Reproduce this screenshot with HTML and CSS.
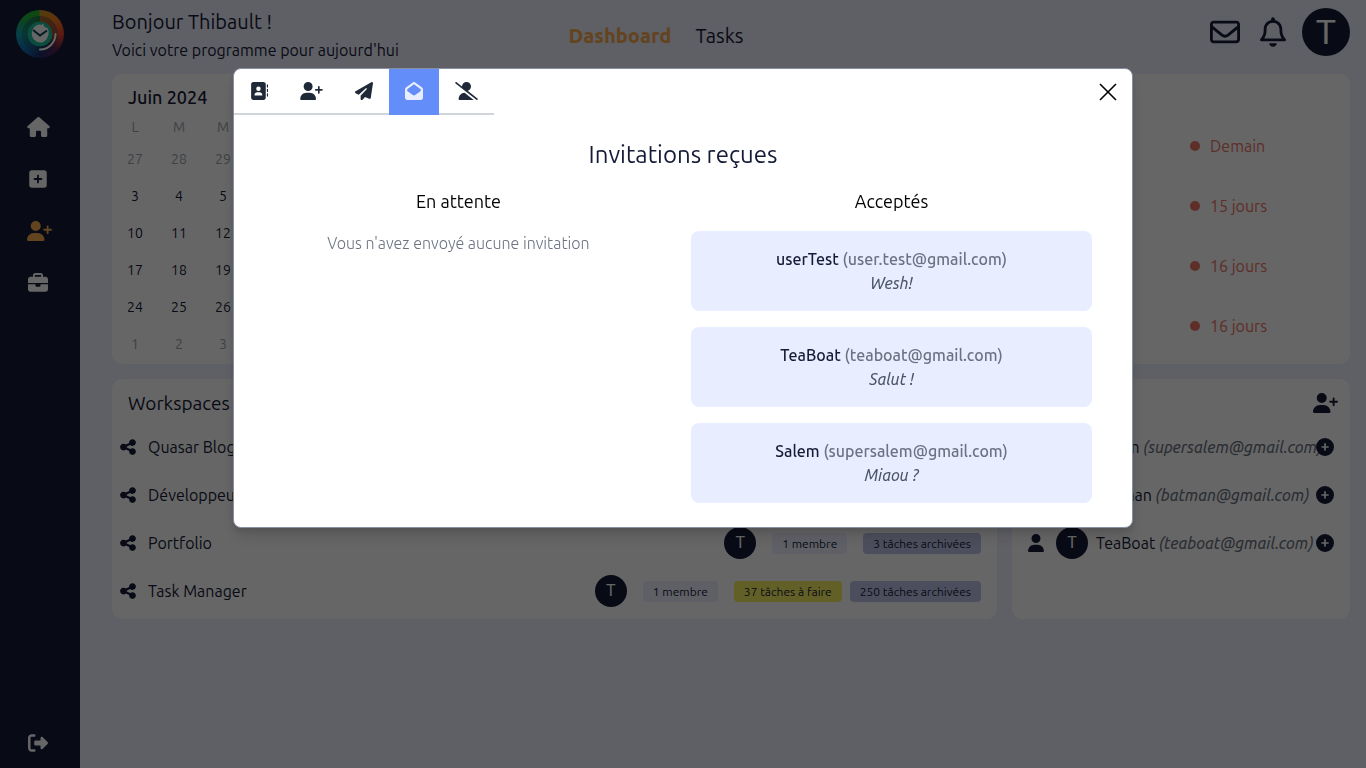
FILE: index.html
```html
<!DOCTYPE html>
<html lang="fr">
<head>
<meta charset="utf-8">
<meta name="viewport" content="width=device-width, initial-scale=1">
<title>Dashboard</title>
<link rel="stylesheet" href="styles.css">
</head>
<body>
<svg class="sprite" aria-hidden="true">
  <symbol id="house" viewBox="0 0 576 512"><path d="M575.8 255.5c0 18-15 32.1-32 32.1h-32l.7 160.2c0 2.7-.2 5.4-.5 8.1V472c0 22.1-17.9 40-40 40H392c-22.1 0-40-17.9-40-40V384c0-17.7-14.3-32-32-32H256c-17.7 0-32 14.3-32 32v88c0 22.1-17.9 40-40 40H104c-22.1 0-40-17.9-40-40V287.6H32c-18 0-32-14-32-32.1c0-9 3-17 10-24L266.4 8c7-7 15-8 22-8s15 2 21 7L564.8 231.5c8 7 12 15 11 24z"/></symbol>
  <symbol id="square-plus" viewBox="0 0 448 512"><path d="M64 32C28.7 32 0 60.7 0 96V416c0 35.3 28.7 64 64 64H384c35.3 0 64-28.7 64-64V96c0-35.3-28.7-64-64-64H64zM200 344V280H136c-13.3 0-24-10.7-24-24s10.7-24 24-24h64V168c0-13.3 10.7-24 24-24s24 10.7 24 24v64h64c13.3 0 24 10.7 24 24s-10.7 24-24 24H248v64c0 13.3-10.7 24-24 24s-24-10.7-24-24z"/></symbol>
  <symbol id="user-plus" viewBox="0 0 640 512"><path d="M96 128a128 128 0 1 1 256 0A128 128 0 1 1 96 128zM0 482.3C0 383.8 79.8 304 178.3 304h91.4C368.2 304 448 383.8 448 482.3c0 16.4-13.3 29.7-29.7 29.7H29.7C13.3 512 0 498.7 0 482.3zM504 312V248H440c-13.3 0-24-10.7-24-24s10.7-24 24-24h64V136c0-13.3 10.7-24 24-24s24 10.7 24 24v64h64c13.3 0 24 10.7 24 24s-10.7 24-24 24H552v64c0 13.3-10.7 24-24 24s-24-10.7-24-24z"/></symbol>
  <symbol id="briefcase" viewBox="0 0 512 512"><path d="M184 48H328c4.4 0 8 3.6 8 8V96H176V56c0-4.4 3.6-8 8-8zm-56 8V96H64C28.7 96 0 124.7 0 160v96H512V160c0-35.3-28.7-64-64-64H384V56c0-30.9-25.1-56-56-56H184c-30.9 0-56 25.1-56 56zM512 288H320v32c0 17.7-14.3 32-32 32H224c-17.7 0-32-14.3-32-32V288H0V416c0 35.3 28.7 64 64 64H448c35.3 0 64-28.7 64-64V288z"/></symbol>
  <symbol id="logout" viewBox="0 0 512 512"><path d="M377.9 105.9L500.7 228.7c7.2 7.2 11.3 17.1 11.3 27.3s-4.1 20.1-11.3 27.3L377.9 406.1c-6.4 6.4-15 9.9-24 9.9c-18.7 0-33.9-15.2-33.9-33.9V320H192c-17.7 0-32-14.3-32-32V224c0-17.7 14.3-32 32-32H320V129.9c0-18.7 15.2-33.9 33.9-33.9c9 0 17.6 3.6 24 9.9zM160 96H96c-17.7 0-32 14.3-32 32V384c0 17.7 14.3 32 32 32h64c17.7 0 32 14.3 32 32s-14.3 32-32 32H96c-53 0-96-43-96-96V128C0 75 43 32 96 32h64c17.7 0 32 14.3 32 32s-14.3 32-32 32z"/></symbol>
  <symbol id="address-book" viewBox="0 0 512 512"><path d="M96 0C60.7 0 32 28.7 32 64V448c0 35.3 28.7 64 64 64H384c35.3 0 64-28.7 64-64V64c0-35.3-28.7-64-64-64H96zM208 288h64c44.2 0 80 35.8 80 80c0 8.800-7.200 16-16 16H144c-8.800 0-16-7.200-16-16c0-44.200 35.800-80 80-80zm-32-96a64 64 0 1 1 128 0 64 64 0 1 1 -128 0zM512 80c0-8.800-7.200-16-16-16s-16 7.200-16 16v64c0 8.800 7.200 16 16 16s16-7.200 16-16V80zM496 192c-8.800 0-16 7.200-16 16v64c0 8.800 7.200 16 16 16s16-7.200 16-16V208c0-8.800-7.200-16-16-16zm16 144c0-8.800-7.200-16-16-16s-16 7.200-16 16v64c0 8.800 7.200 16 16 16s16-7.200 16-16V336z"/></symbol>
  <symbol id="paper-plane" viewBox="0 0 512 512"><path d="M498.1 5.6c10.1 7 15.4 19.1 13.5 31.2l-64 416c-1.5 9.7-7.4 18.2-16 23s-18.900 5.400-28 1.600L284 427.700l-68.500 74.100c-8.900 9.700-22.900 12.900-35.200 8.100S160 493.200 160 480V396.400c0-4 1.500-7.800 4.200-10.700L331.800 202.800c5.800-6.300 5.600-16-.4-22s-15.700-6.400-22-.7L106 360.800 17.700 316.600C7.100 311.300 .3 300.700 0 288.900s5.900-22.800 16.100-28.700l448-256c10.700-6.100 23.900-5.500 34 1.400z"/></symbol>
  <symbol id="envelope-open" viewBox="0 0 512 512"><path fill-rule="evenodd" d="M64 208.100L256 65.900 448 208.100v47.400L289.500 373c-9.700 7.200-21.400 11-33.500 11s-23.800-3.900-33.500-11L64 255.500V208.100zM256 0c-12.100 0-23.800 3.900-33.500 11L25.900 156.700C9.600 168.800 0 187.800 0 208.100V448c0 35.300 28.700 64 64 64H448c35.300 0 64-28.700 64-64V208.100c0-20.300-9.600-39.400-25.900-51.400L289.500 11C279.800 3.900 268.100 0 256 0z"/></symbol>
  <symbol id="user-slash" viewBox="0 0 640 512"><path d="M38.800 5.100C28.400-3.100 13.300-1.200 5.100 9.200S-1.200 34.700 9.200 42.900l592 464c10.400 8.200 25.500 6.300 33.700-4.100s6.300-25.500-4.100-33.700L353.300 251.600C407.900 237 448 187.200 448 128C448 57.300 390.700 0 320 0C250.200 0 193.500 55.800 192 125.200L38.800 5.100zM264.300 304.300C170.500 309.400 96 387.200 96 482.300c0 16.400 13.300 29.700 29.700 29.700H514.300c3.900 0 7.600-.7 11-2.100l-261-205.600z"/></symbol>
  <symbol id="share" viewBox="0 0 448 512"><path d="M352 224c53 0 96-43 96-96s-43-96-96-96s-96 43-96 96c0 4 .2 8 .7 11.900l-94.100 47C145.400 170.200 121.900 160 96 160c-53 0-96 43-96 96s43 96 96 96c25.900 0 49.400-10.200 66.600-26.900l94.100 47c-.5 3.900-.7 7.800-.7 11.900c0 53 43 96 96 96s96-43 96-96s-43-96-96-96c-25.900 0-49.400 10.200-66.600 26.900l-94.100-47c.5-3.900 .7-7.800 .7-11.900s-.2-8-.7-11.900l94.100-47C302.600 213.800 326.100 224 352 224z"/></symbol>
  <symbol id="circle-plus" viewBox="0 0 512 512"><path d="M256 512A256 256 0 1 0 256 0a256 256 0 1 0 0 512zM232 344V280H168c-13.300 0-24-10.700-24-24s10.700-24 24-24h64V168c0-13.300 10.700-24 24-24s24 10.700 24 24v64h64c13.300 0 24 10.700 24 24s-10.700 24-24 24H280v64c0 13.300-10.700 24-24 24s-24-10.700-24-24z"/></symbol>
  <symbol id="user" viewBox="0 0 448 512"><path d="M224 256A128 128 0 1 0 224 0a128 128 0 1 0 0 256zm-45.700 48C79.800 304 0 383.800 0 482.300C0 498.700 13.300 512 29.700 512H418.300c16.400 0 29.700-13.300 29.700-29.700C448 383.800 368.200 304 269.700 304H178.300z"/></symbol>
  <symbol id="envelope" viewBox="0 0 512 512"><path d="M64 112c-8.800 0-16 7.200-16 16v22.100L220.500 291.700c20.700 17 50.400 17 71.100 0L464 150.100V128c0-8.800-7.200-16-16-16H64zM48 212.200V384c0 8.800 7.200 16 16 16H448c8.800 0 16-7.200 16-16V212.200L322 328.800c-38.400 31.500-93.700 31.500-132 0L48 212.200zM0 128C0 92.700 28.700 64 64 64H448c35.300 0 64 28.700 64 64V384c0 35.300-28.700 64-64 64H64c-35.300 0-64-28.700-64-64V128z"/></symbol>
  <symbol id="bell" viewBox="0 0 448 512"><path d="M224 0c-17.700 0-32 14.300-32 32V51.200C119 66 64 130.600 64 208v25.400c0 45.400-15.500 89.500-43.800 124.900L5.300 377c-5.800 7.200-6.900 17.100-2.900 25.400S14.800 416 24 416H424c9.200 0 17.600-5.300 21.600-13.600s2.900-18.200-2.900-25.400l-14.900-18.600C399.500 322.900 384 278.800 384 233.400V208c0-77.400-55-142-128-156.800V32c0-17.700-14.300-32-32-32zm0 96c61.900 0 112 50.100 112 112v25.400c0 47.900 13.900 94.600 39.700 134.600H72.300C98.100 328 112 281.300 112 233.400V208c0-61.900 50.100-112 112-112zm64 352H160c0 17 6.700 33.300 18.700 45.300s28.300 18.700 45.300 18.700s33.300-6.700 45.300-18.700s18.700-28.300 18.700-45.300z"/></symbol>
</svg>

<div class="app">
  <aside class="sidebar">
    <a class="logo" href="#" aria-label="Accueil">
      <span class="logo-inner">
        <svg viewBox="6 6 36 36"><path d="M24 14.500a9 9 0 1 0 3.500 17.500l3-2.500 2-4.500a8 8 0 0 0-1-7l-3-1-1.500-3.500-1.500 1.500z" fill="#fff"/><path d="M17 20l7 5.500 7-5" fill="none" stroke="#0e4a55" stroke-width="2"/><path d="M39.500 24A15.500 15.500 0 0 1 24 39.500" fill="none" stroke="#fff" stroke-width="2" stroke-linecap="round"/></svg>
      </span>
    </a>
    <nav class="side-nav" aria-label="Navigation">
      <a href="#" aria-label="Accueil"><svg class="i-house"><use href="#house"/></svg></a>
      <a href="#" aria-label="Ajouter"><svg class="i-narrow"><use href="#square-plus"/></svg></a>
      <a href="#" class="current" aria-label="Contacts"><svg class="i-wide"><use href="#user-plus"/></svg></a>
      <a href="#" aria-label="Workspaces"><svg class="i-square"><use href="#briefcase"/></svg></a>
    </nav>
    <div class="side-nav side-end">
      <a href="#" aria-label="Déconnexion"><svg class="i-square"><use href="#logout"/></svg></a>
    </div>
  </aside>

  <div class="page">
    <header class="top">
      <div class="greeting">
        <h1>Bonjour Thibault !</h1>
        <p>Voici votre programme pour aujourd'hui</p>
      </div>
      <nav class="top-nav" aria-label="Vues">
        <a href="#" class="active">Dashboard</a>
        <a href="#">Tasks</a>
      </nav>
      <div class="top-actions">
        <button type="button" aria-label="Messages"><svg class="i-envelope"><use href="#envelope"/></svg></button>
        <button type="button" aria-label="Notifications"><svg class="i-bell"><use href="#bell"/></svg></button>
        <button type="button" class="avatar large" aria-label="Profil">T</button>
      </div>
    </header>

    <main class="board">
      <div class="row first">
        <section class="card calendar">
          <h2>Juin 2024</h2>
          <table>
            <thead><tr><th>L</th><th>M</th><th>M</th><th>J</th><th>V</th><th>S</th><th>D</th></tr></thead>
            <tbody>
              <tr><td class="out">27</td><td class="out">28</td><td class="out">29</td><td class="out">30</td><td class="out">31</td><td>1</td><td>2</td></tr>
              <tr><td>3</td><td>4</td><td>5</td><td>6</td><td>7</td><td>8</td><td>9</td></tr>
              <tr><td>10</td><td>11</td><td>12</td><td>13</td><td>14</td><td>15</td><td>16</td></tr>
              <tr><td>17</td><td>18</td><td>19</td><td>20</td><td>21</td><td>22</td><td>23</td></tr>
              <tr><td>24</td><td>25</td><td>26</td><td>27</td><td>28</td><td>29</td><td>30</td></tr>
              <tr><td class="out">1</td><td class="out">2</td><td class="out">3</td><td class="out">4</td><td class="out">5</td><td class="out">6</td><td class="out">7</td></tr>
            </tbody>
          </table>
        </section>
        <section class="card deadlines" aria-label="Échéances">
          <ul>
            <li>Demain</li>
            <li>15 jours</li>
            <li>16 jours</li>
            <li>16 jours</li>
          </ul>
        </section>
      </div>

      <div class="row second">
        <section class="card workspaces">
          <h2>Workspaces</h2>
          <ul>
            <li><svg class="i-share"><use href="#share"/></svg><a href="#">Quasar Blog</a></li>
            <li><svg class="i-share"><use href="#share"/></svg><a href="#">Développeur</a></li>
            <li><svg class="i-share"><use href="#share"/></svg><a href="#">Portfolio</a>
              <span class="avatar">T</span><span class="badge">1 membre</span><span class="tags"><span class="badge done">3 tâches archivées</span></span></li>
            <li><svg class="i-share"><use href="#share"/></svg><a href="#">Task Manager</a>
              <span class="avatar">T</span><span class="badge">1 membre</span><span class="tags"><span class="badge todo">37 tâches à faire</span><span class="badge done">250 tâches archivées</span></span></li>
          </ul>
        </section>
        <section class="card contacts" aria-label="Contacts">
          <div class="contacts-head"><button type="button" aria-label="Ajouter un contact"><svg class="i-wide"><use href="#user-plus"/></svg></button></div>
          <ul>
            <li><svg class="i-user"><use href="#user"/></svg><span class="avatar">S</span><span class="who">Salem <em>(supersalem@gmail.com)</em></span><button type="button" aria-label="Ajouter Salem"><svg class="i-tab"><use href="#circle-plus"/></svg></button></li>
            <li><svg class="i-user"><use href="#user"/></svg><span class="avatar">B</span><span class="who">Batman <em>(batman@gmail.com)</em></span><button type="button" aria-label="Ajouter Batman"><svg class="i-tab"><use href="#circle-plus"/></svg></button></li>
            <li><svg class="i-user"><use href="#user"/></svg><span class="avatar">T</span><span class="who">TeaBoat <em>(teaboat@gmail.com)</em></span><button type="button" aria-label="Ajouter TeaBoat"><svg class="i-tab"><use href="#circle-plus"/></svg></button></li>
          </ul>
        </section>
      </div>
    </main>
  </div>
</div>

<div class="overlay">
  <div class="modal" role="dialog" aria-modal="true" aria-labelledby="modal-title">
    <div class="modal-bar">
      <div class="tabs" role="tablist">
        <button type="button" role="tab" aria-label="Contacts"><svg class="i-tab"><use href="#address-book"/></svg></button>
        <button type="button" role="tab" aria-label="Ajouter"><svg class="i-tab-wide"><use href="#user-plus"/></svg></button>
        <button type="button" role="tab" aria-label="Invitations envoyées"><svg class="i-tab"><use href="#paper-plane"/></svg></button>
        <button type="button" role="tab" aria-label="Invitations reçues" aria-selected="true" class="selected"><svg class="i-tab"><use href="#envelope-open"/></svg></button>
        <button type="button" role="tab" aria-label="Bloqués"><svg class="i-tab-wide"><use href="#user-slash"/></svg></button>
      </div>
      <button type="button" class="close" aria-label="Fermer"><svg viewBox="0 0 18 18"><path d="M1 1l16 16M17 1L1 17" fill="none" stroke="#000" stroke-width="1.600"/></svg></button>
    </div>
    <h2 id="modal-title">Invitations reçues</h2>
    <div class="columns">
      <section>
        <h3>En attente</h3>
        <p class="empty">Vous n'avez envoyé aucune invitation</p>
      </section>
      <section>
        <h3>Acceptés</h3>
        <ul class="invites">
          <li><p class="sender">userTest <span>(user.test@gmail.com)</span></p><p class="message">Wesh!</p></li>
          <li><p class="sender">TeaBoat <span>(teaboat@gmail.com)</span></p><p class="message">Salut !</p></li>
          <li><p class="sender">Salem <span>(supersalem@gmail.com)</span></p><p class="message">Miaou ?</p></li>
        </ul>
      </section>
    </div>
  </div>
</div>
</body>
</html>
```
FILE: styles.css
```css
*, *::before, *::after { box-sizing: border-box; }

:root {
  --navy: #151a36;
  --orange: #f8aa50;
  --mist: #eef0ff;
  --regular: 430;
  --medium: 560;
}

body {
  margin: 0;
  background: var(--mist);
  color: var(--navy);
  font-family: Ubuntu, "Noto Sans", "Open Sans", sans-serif;
  font-size: 16px;
  font-weight: var(--regular);
  line-height: 24px;
}

h1, h2, h3, p, ul { margin: 0; padding: 0; font-weight: var(--regular); }
ul { list-style: none; }
a { color: inherit; text-decoration: none; }
button { border: 0; padding: 0; background: none; color: inherit; font: inherit; cursor: pointer; }
svg { display: block; fill: currentColor; flex: none; }
.sprite { display: none; }

.i-house { width: 23px; height: 20px; }
.i-narrow { width: 18px; height: 20px; }
.i-square { width: 20px; height: 20px; }
.i-wide { width: 25px; height: 20px; }
.i-tab { width: 18px; height: 18px; }
.i-tab-wide { width: 23px; height: 18px; }
.i-share { width: 16px; height: 18px; }
.i-user { width: 16px; height: 18px; }
.i-envelope { width: 30px; height: 30px; }
.i-bell { width: 26px; height: 30px; }

.app { display: flex; min-height: 100vh; }

.sidebar {
  display: flex;
  flex-direction: column;
  width: 80px;
  padding: 10px 16px 13px;
  background: var(--navy);
  color: #fff;
}
.logo {
  display: grid;
  place-items: center;
  width: 48px;
  height: 48px;
  border-radius: 50%;
  background: conic-gradient(#c9952a, #f0821e 12%, #e8432c 25%, #5b2450 37%, #1d2b6e 50%, #1172b8 64%, #12a0b0 75%, #1fb43e 88%, #27b52a 99%, #c9952a);
}
.logo-inner {
  display: grid;
  place-items: center;
  width: 36px;
  height: 36px;
  border-radius: 50%;
  background: radial-gradient(closest-side, #1bbf98 68%, transparent 70%), conic-gradient(#a06a30, #a04a34 25%, #1c2456 42%, #155e8a 60%, #128a80 75%, #1f7a3c);
}
.logo svg { width: 36px; height: 36px; }

.side-nav { display: flex; flex-direction: column; gap: 28px; padding: 57px 11px 0; }
.side-nav a { display: grid; width: 22px; height: 24px; align-items: center; justify-content: safe center; }
.side-nav .current { color: var(--orange); }
.side-end { margin-top: auto; padding-top: 16px; }

.page { flex: 1; min-width: 0; padding: 8px 16px 16px 32px; }

.top { display: grid; grid-template-columns: 1fr auto 1fr; height: 66px; }
.greeting h1 { font-size: 20px; line-height: 28px; }
.greeting p { line-height: 28px; white-space: nowrap; }
.top-nav { display: flex; gap: 24px; align-items: center; height: 56px; margin-right: 150px; font-size: 20px; }
.top-nav .active { color: var(--orange); font-weight: 800; }
.top-actions { display: flex; align-items: center; justify-content: flex-end; height: 48px; gap: 16px; }
.top-actions .i-envelope { margin-right: 4px; }

.avatar {
  display: grid;
  flex: none;
  place-items: center;
  width: 32px;
  height: 32px;
  border-radius: 50%;
  background: var(--navy);
  color: #fff;
  font-family: Roboto, "Liberation Sans", sans-serif;
  font-size: 16px;
  font-weight: 400;
}
.avatar.large { width: 48px; height: 48px; font-size: 34px; }

.board { display: grid; gap: 15px; }
.row { display: grid; gap: 15px; }
.first { grid-template-columns: 340px 1fr; }
.second { grid-template-columns: minmax(0, 885fr) minmax(0, 338fr); }
.card { border-radius: 10px; background: #fff; }

.calendar { padding: 11px 0 2px; }
.calendar h2 { padding-left: 16px; font-size: 18px; font-weight: var(--medium); }
.calendar table { margin-left: 1px; border-collapse: collapse; table-layout: fixed; width: 308px; font-size: 14px; text-align: center; }
.calendar th { height: 31px; padding: 4px 0 0; color: #9ca3af; }
.calendar th, .calendar td { font-weight: var(--regular); }
.calendar td { height: 37px; padding: 0; }
.calendar .out { color: #9ca3af; }

.deadlines { padding: 42px 17px 8px; }
.deadlines ul { width: 143px; margin-left: auto; }
.deadlines li { display: flex; align-items: center; gap: 10px; height: 60px; color: #ec7468; }
.deadlines li::before { content: ""; width: 10px; height: 10px; border-radius: 50%; background: currentColor; }

.workspaces { padding: 12px 16px 4px 8px; }
.workspaces h2 { padding: 0 8px 8px; font-size: 19px; }
.workspaces li { display: flex; align-items: center; gap: 16px; height: 48px; }
.workspaces li svg { margin-right: -4px; }
.workspaces li a { flex: 1; }
.tags { display: flex; gap: 8px; }
.badge { padding: 0 10px; border-radius: 4px; background: var(--mist); font-size: 12px; line-height: 21px; }
.badge.todo { background: #f5f062; }
.badge.done { background: #bfc3e8; }

.contacts { padding: 12px 16px; }
.contacts-head { display: flex; justify-content: flex-end; height: 32px; margin-right: -4px; }
.contacts-head button { height: 24px; }
.contacts li { display: flex; align-items: center; height: 48px; }
.contacts .avatar { margin: 0 8px 0 12px; }
.who { flex: 1; min-width: 0; white-space: nowrap; }
.who em { color: #6b7280; }

.overlay {
  position: fixed;
  inset: 0;
  padding: 68px 16px 16px;
  background: rgba(0, 0, 0, .6);
}
.modal {
  max-width: 900px;
  margin: 0 auto;
  overflow: hidden;
  border: 1px solid #8790a0;
  border-radius: 8px;
  background: #fff;
  box-shadow: 0 10px 15px rgba(0, 0, 0, .1), 0 4px 6px rgba(0, 0, 0, .1);
}
.modal-bar { display: flex; align-items: center; justify-content: space-between; padding-right: 15px; }
.tabs { display: flex; }
.tabs button { height: 46px; padding: 0 16px; border-bottom: 2px solid #d1d5db; color: #1f2937; }
.tabs .selected { border-color: #638df8; background: #638df8; color: #e8eeff; }
.close svg { width: 18px; height: 18px; }
.modal h2 { margin-top: 24px; font-size: 24px; line-height: 32px; text-align: center; }
.columns { display: grid; grid-template-columns: 1fr 1fr; gap: 32px; padding: 16px 40px 24px 24px; text-align: center; }
.columns h3 { color: #000; font-size: 18px; line-height: 28px; }
.empty { margin-top: 16px; color: #6b7280; font-weight: 300; }
.invites { display: grid; gap: 16px; margin-top: 16px; }
.invites li { padding: 16px; border-radius: 8px; background: #e8eeff; }
.sender { font-weight: var(--medium); }
.sender span { color: #6b7280; }
.message { color: #4b5563; font-style: italic; }
```
